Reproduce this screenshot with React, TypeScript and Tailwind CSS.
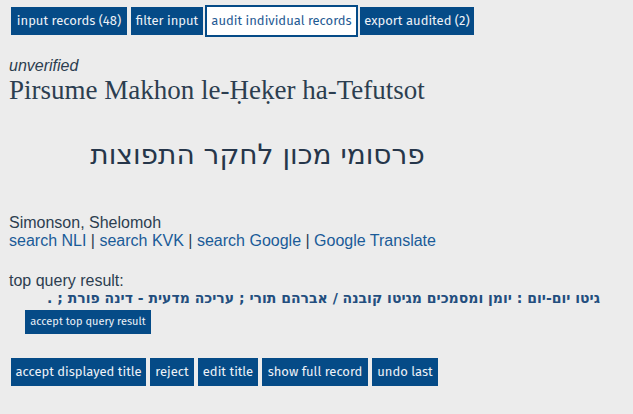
const btnFont = { fontFamily: '"Fira Sans", Roboto, sans-serif' }

function NavButton({ label, width, active }: { label: string; width: string; active?: boolean }) {
  if (active) {
    return (
      <button
        className={`-mx-[2px] flex h-[32px] ${width} items-center justify-center whitespace-nowrap border-2 border-[#054b87] bg-white text-[13px] text-[#1f5a93]`}
        style={btnFont}
      >
        {label}
      </button>
    )
  }
  return (
    <button
      className={`flex h-[28px] ${width} items-center justify-center whitespace-nowrap bg-[#054b87] text-[13px] text-[#eef2f7]`}
      style={btnFont}
    >
      {label}
    </button>
  )
}

export default function App() {
  return (
    <div className="min-h-[414px] w-full bg-[#ececec] text-[#2c3e50] font-['Liberation_Sans',Arial,sans-serif]">
      {/* tabs */}
      <nav className="flex items-center gap-[4px] pl-[11px] pt-[5px]">
        <NavButton label="input records (48)" width="w-[116px]" />
        <NavButton label="filter input" width="w-[72px]" />
        <NavButton label="audit individual records" width="w-[153px]" active />
        <NavButton label="export audited (2)" width="w-[114px]" />
      </nav>

      <main className="px-[9px]">
        <div className="inline-block">
          <div className="mt-[20px] text-[16px] leading-[18px] italic">unverified</div>
          <h1 className="font-['Liberation_Serif',serif] text-[27px] leading-[31px] font-normal">
            Pirsume Makhon le-Ḥeḳer ha-Tefutsot
          </h1>
          <div
            dir="rtl"
            className="mt-[32px] text-right font-['DejaVu_Sans',sans-serif] text-[28px] leading-[33px] text-[#26364a]"
          >
            פרסומי מכון לחקר התפוצות
          </div>
        </div>

        <div className="mt-[43px] text-[16px] leading-[18.4px]">
          <div>Simonson, Shelomoh</div>
          <div>
            <a className="text-[#1a5b98]">search NLI</a> | <a className="text-[#1a5b98]">search KVK</a> |{' '}
            <a className="text-[#1a5b98]">search Google</a> | <a className="text-[#1a5b98]">Google Translate</a>
          </div>
        </div>

        <div className="mt-[21px] text-[16px] leading-[18.4px]">top query result:</div>
        <div
          dir="rtl"
          className="ml-[33px] mr-[24px] font-['DejaVu_Sans',sans-serif] text-[14px] leading-[16px] font-bold text-[#234e7e]"
        >
          גיטו יום-יום : יומן ומסמכים מגיטו קובנה / אברהם תורי ; עריכה מדעית - דינה פורת ; .
        </div>
        <button
          className="ml-[16px] mt-[4px] flex h-[24px] w-[126px] items-center justify-center whitespace-nowrap bg-[#054b87] text-[11px] text-[#eef2f7]"
          style={btnFont}
        >
          accept top query result
        </button>

        {/* actions */}
        <div className="ml-[2px] mt-[24px] flex gap-[4px]">
          {[
            ['accept displayed title', 'w-[135px]'],
            ['reject', 'w-[44px]'],
            ['edit title', 'w-[60px]'],
            ['show full record', 'w-[106px]'],
            ['undo last', 'w-[66px]'],
          ].map(([label, w]) => (
            <button
              key={label}
              className={`flex h-[28px] ${w} items-center justify-center whitespace-nowrap bg-[#054b87] text-[13px] text-[#eef2f7]`}
              style={btnFont}
            >
              {label}
            </button>
          ))}
        </div>
      </main>
    </div>
  )
}
